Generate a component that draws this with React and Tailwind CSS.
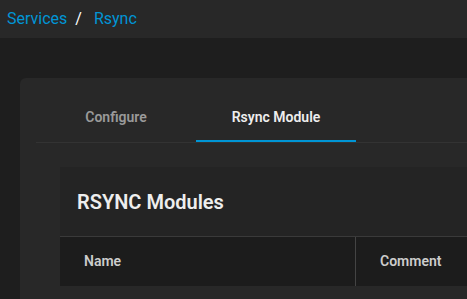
import React from "react";

const TABS = ["Configure", "Rsync Module"];

export default function App() {
  const active = 1;
  return (
    <div className="w-[467px] h-[299px] overflow-hidden bg-[#1e1e1e] font-['Roboto',sans-serif]">
      {/* Breadcrumb bar */}
      <div className="h-[38px] bg-[#282828] flex items-center pl-[7px] text-[16px] text-[#0095d5]">
        <span>Services</span>
        <span className="text-white ml-[8px] mr-[12px]">/</span>
        <span>Rsync</span>
      </div>

      {/* Main card */}
      <div className="ml-[20px] mt-[40px] w-[480px] h-[260px] bg-[#282828] rounded-tl-[6px] pl-[16px] pt-[16px]">
        <div className="flex border-b border-[#333333] h-[49px]">
          {TABS.map((t, i) => (
            <div
              key={t}
              className={
                "w-[160px] flex items-center justify-center text-[14px] font-semibold border-b-2 " +
                (i === active ? "text-[#eeeeee] border-[#0095d5]" : "text-[#9a9a9a] border-transparent")
              }
            >
              {t}
            </div>
          ))}
        </div>

        <div className="pl-[24px] pt-[24px]">
          <div className="bg-[#242424] w-[420px]">
            <div className="h-[69px] flex items-center pl-[17px] text-[20px] font-semibold text-[#eeeeee]">
              RSYNC Modules
            </div>
            <div className="h-[50px] flex border-t border-[#3a3a3a] bg-[#1c1c1c] text-[14px] font-semibold text-[#cccccc]">
              <div className="w-[296px] flex items-center pl-[24px] border-r border-[#444444]">Name</div>
              <div className="flex-1 flex items-center pl-[24px]">Comment</div>
            </div>
          </div>
        </div>
      </div>
    </div>
  );
}
